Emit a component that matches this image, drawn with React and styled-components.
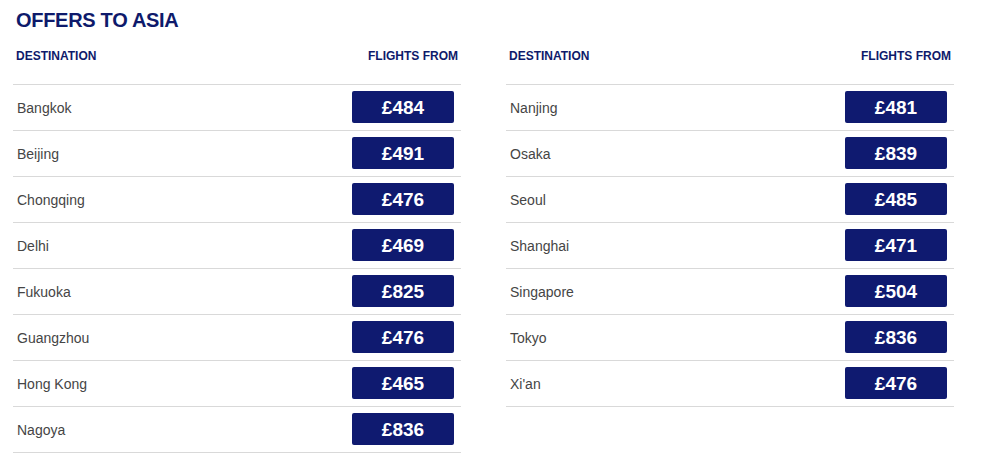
import React from "react";
import styled, { createGlobalStyle } from "styled-components";

const Global = createGlobalStyle`
  html, body { margin: 0; padding: 0; background: #fff; }
  body { font-family: "Liberation Sans", Arial, sans-serif; }
`;

const Page = styled.div`
  padding: 8px 13px 0 13px;
`;

const Title = styled.h2`
  margin: 0 0 0 3px;
  font-size: 20px;
  line-height: 24px;
  font-weight: 700;
  color: #0e1a6b;
  letter-spacing: -0.3px;
`;

const Columns = styled.div`
  display: grid;
  grid-template-columns: 448px 448px;
  column-gap: 45px;
  align-items: start;
`;

const Table = styled.div`
  display: flex;
  flex-direction: column;
`;

const HeadRow = styled.div`
  display: flex;
  justify-content: space-between;
  padding: 16px 3px 20px 3px;
  border-bottom: 1px solid #d9d9d9;
  font-size: 12px;
  line-height: 16px;
  font-weight: 700;
  color: #0e1a6b;
`;

const Row = styled.div`
  display: flex;
  align-items: center;
  justify-content: space-between;
  height: 45px;
  padding: 0 7px 0 4px;
  border-bottom: 1px solid #d9d9d9;
`;

const City = styled.span`
  font-size: 14px;
  color: #454545;
`;

const Price = styled.span`
  display: flex;
  align-items: center;
  justify-content: center;
  box-sizing: border-box;
  width: 102px;
  height: 32px;
  margin-top: -1px;
  padding-top: 2px;
  border-radius: 2px;
  background: #0f1a70;
  color: #fff;
  font-size: 19px;
  font-weight: 700;
`;

const left = [
  ["Bangkok", "£484"],
  ["Beijing", "£491"],
  ["Chongqing", "£476"],
  ["Delhi", "£469"],
  ["Fukuoka", "£825"],
  ["Guangzhou", "£476"],
  ["Hong Kong", "£465"],
  ["Nagoya", "£836"],
];

const right = [
  ["Nanjing", "£481"],
  ["Osaka", "£839"],
  ["Seoul", "£485"],
  ["Shanghai", "£471"],
  ["Singapore", "£504"],
  ["Tokyo", "£836"],
  ["Xi'an", "£476"],
];

function OfferTable({ rows }) {
  return (
    <Table>
      <HeadRow>
        <span>DESTINATION</span>
        <span>FLIGHTS FROM</span>
      </HeadRow>
      {rows.map(([c, p]) => (
        <Row key={c}>
          <City>{c}</City>
          <Price>{p}</Price>
        </Row>
      ))}
    </Table>
  );
}

export default function App() {
  return (
    <Page>
      <Global />
      <Title>OFFERS TO ASIA</Title>
      <Columns>
        <OfferTable rows={left} />
        <OfferTable rows={right} />
      </Columns>
    </Page>
  );
}
